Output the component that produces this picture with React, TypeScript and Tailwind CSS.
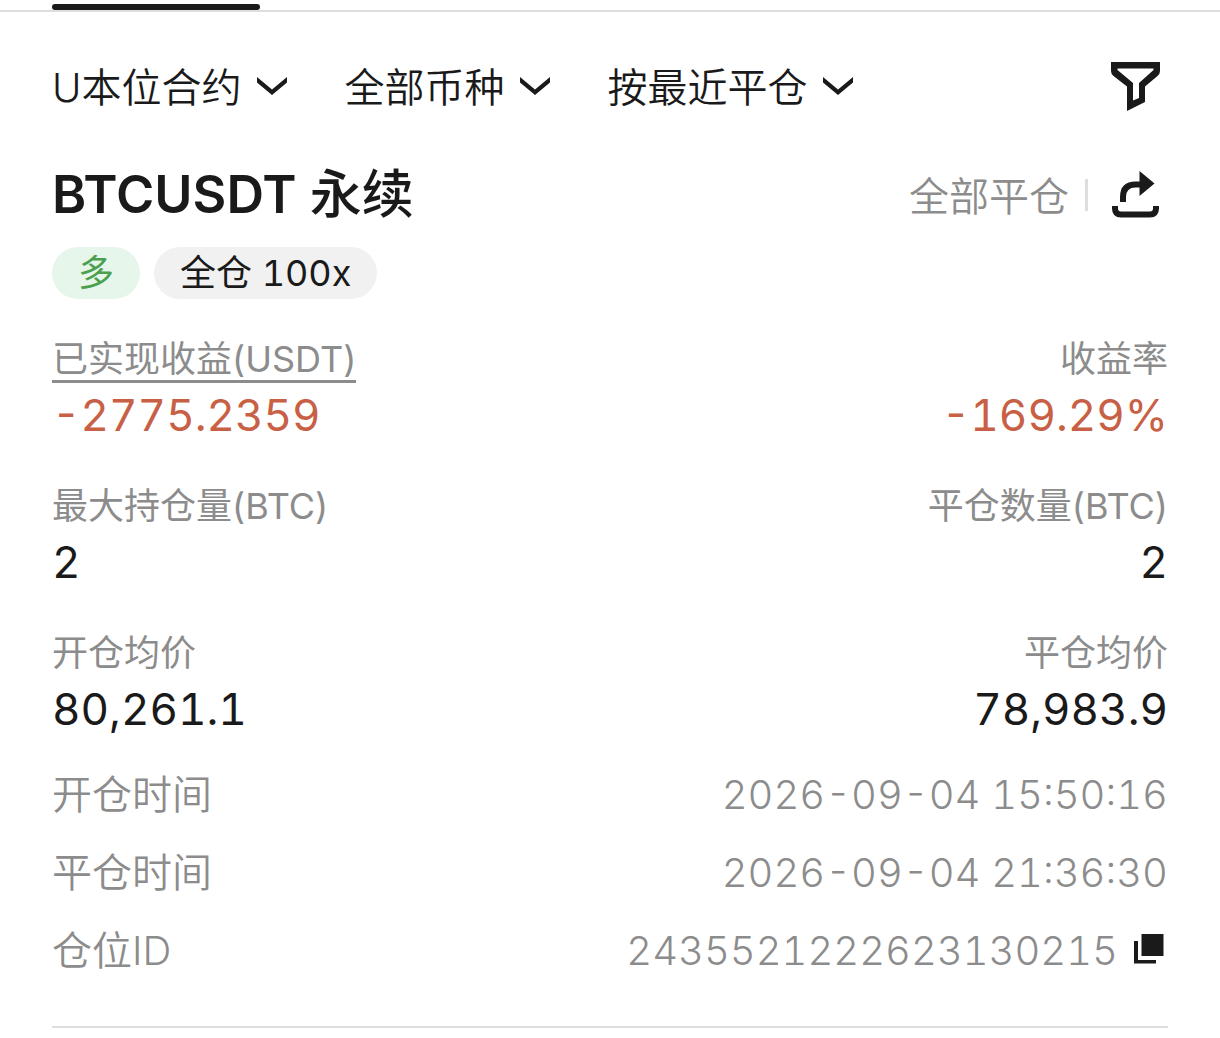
import clsx from "clsx";

type StatItem = { label: string; value: string; hint?: boolean };
type StatRow = { left: StatItem; right: StatItem; loss?: boolean };

const filters = [
  { id: "contract", label: "U本位合约" },
  { id: "coin", label: "全部币种" },
  { id: "sort", label: "按最近平仓" },
];

const stats: StatRow[] = [
  {
    left: { label: "已实现收益(USDT)", value: "-2775.2359", hint: true },
    right: { label: "收益率", value: "-169.29%" },
    loss: true,
  },
  {
    left: { label: "最大持仓量(BTC)", value: "2" },
    right: { label: "平仓数量(BTC)", value: "2" },
  },
  {
    left: { label: "开仓均价", value: "80,261.1" },
    right: { label: "平仓均价", value: "78,983.9" },
  },
];

const details = [
  { label: "开仓时间", value: "2026-09-04 15:50:16" },
  { label: "平仓时间", value: "2026-09-04 21:36:30" },
  { label: "仓位ID", value: "2435521222623130215", copy: true },
];

function ChevronIcon() {
  return (
    <svg viewBox="0 0 30 20" className="h-5 w-[30px]" aria-hidden>
      <path d="M0 1L15 13.500L30 1V6.500L15 19L0 6.500Z" fill="currentColor" />
    </svg>
  );
}

function FilterIcon() {
  return (
    <svg viewBox="0 0 50 50" className="size-[50px]" aria-hidden>
      <path
        fillRule="evenodd"
        fill="currentColor"
        d="M1 1H50V10Q50 13 47.500 15L35 25.500V41L17 50V25.500L3.500 15Q1 13 1 10ZM7.500 7.500V9L23 22V39.500L29 37V22L43.500 9V7.500Z"
      />
    </svg>
  );
}

function ShareIcon() {
  return (
    <svg viewBox="0 0 48 48" className="size-12" aria-hidden>
      <path d="M27.500 0L42.500 12.500L27.500 25Z" fill="currentColor" />
      <path
        d="M11 31V26Q11 13.500 23.500 13.500H29M3 35V37.500Q3 43.500 9 43.500H38Q44 43.500 44 37.500V35"
        fill="none"
        stroke="currentColor"
        strokeWidth="6"
      />
    </svg>
  );
}

function CopyIcon() {
  return (
    <svg viewBox="0 0 30 36" className="h-9 w-[30px]" aria-hidden>
      <path d="M7.500 1H29.500V23H7.500ZM0 8H4V27H22V30.500H0Z" fill="currentColor" />
    </svg>
  );
}

function Stat({ item, loss, end }: { item: StatItem; loss?: boolean; end?: boolean }) {
  return (
    <div className={clsx("flex flex-col", end ? "items-end" : "items-start")}>
      <dt
        className={clsx(
          "h-12 text-4xl leading-12 text-[#8c8c8c]",
          item.hint && "border-b-3 border-[#8c8c8c]",
        )}
      >
        {item.label}
      </dt>
      <dd
        className={clsx(
          "text-[44px] leading-16 tabular-nums",
          loss ? "text-[#c86045]" : "text-[#1a1a1a]",
        )}
      >
        {item.value}
      </dd>
    </div>
  );
}

export default function App() {
  return (
    <main className="min-h-screen bg-white font-['Inter','Noto_Sans_CJK_SC',sans-serif] text-[#1a1a1a]">
      <div className="flex h-3 items-end border-b-2 border-[#dedede] px-13">
        <div className="h-1.5 w-52 rounded-full bg-[#1a1a1a]" />
      </div>

      <div className="px-13">
        <div className="flex items-center justify-between pt-[42px] pr-2">
          <div className="flex gap-[57px]">
            {filters.map((filter) => (
              <button
                key={filter.id}
                type="button"
                className="flex items-center gap-4 text-[40px] leading-15 font-[350]"
              >
                <span className="mt-1">{filter.label}</span>
                <ChevronIcon />
              </button>
            ))}
          </div>
          <button type="button" aria-label="筛选">
            <FilterIcon />
          </button>
        </div>

        <article className="border-b-2 border-[#dedede] pt-[45px] pb-9">
          <header className="flex items-center justify-between pr-2">
            <h2 className="text-[52px] leading-15 font-semibold">
              BTCUSDT <span className="font-medium">永续</span>
            </h2>
            <div className="flex items-center">
              <span className="mt-1 text-[40px] leading-15 font-[350] text-[#8c8c8c]">
                全部平仓
              </span>
              <span className="ml-4 h-8 w-[3px] bg-[#dedede]" />
              <button type="button" aria-label="分享" className="ml-6">
                <ShareIcon />
              </button>
            </div>
          </header>

          <div className="mt-5 flex gap-3.5 text-4xl leading-13">
            <span className="rounded-full bg-[#e6f6ea] px-6.5 text-[#4aa04f]">多</span>
            <span className="rounded-full bg-[#f1f1f1] px-6.5 tabular-nums">
              全仓 100x
            </span>
          </div>

          <div className="mt-9 flex flex-col gap-[35px]">
            {stats.map((row) => (
              <dl key={row.left.label} className="flex justify-between">
                <Stat item={row.left} loss={row.loss} />
                <Stat item={row.right} loss={row.loss} end />
              </dl>
            ))}
          </div>

          <dl className="mt-[15px] text-[40px] leading-[78px] text-[#8c8c8c]">
            {details.map((row) => (
              <div key={row.label} className="flex justify-between">
                <dt className="font-[350]">{row.label}</dt>
                <dd className="flex items-center gap-4 font-light tabular-nums">
                  {row.value}
                  {row.copy && (
                    <button type="button" aria-label="复制" className="mr-1 text-[#1a1a1a]">
                      <CopyIcon />
                    </button>
                  )}
                </dd>
              </div>
            ))}
          </dl>
        </article>
      </div>
    </main>
  );
}
